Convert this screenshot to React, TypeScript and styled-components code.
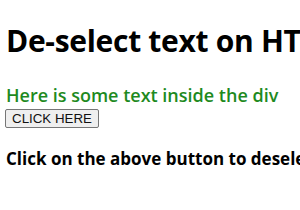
import React, { useRef } from "react";
import styled, { createGlobalStyle } from "styled-components";

const GlobalStyle = createGlobalStyle`
  body {
    margin: 0;
    background: #fff;
    font-family: "Open Sans", "Noto Sans", sans-serif;
    color: #000;
    overflow: hidden;
  }
`;

const Page = styled.div`
  display: flex;
  flex-direction: column;
  align-items: flex-start;
  padding: 0 0 0 6px;
  width: 300px;
  white-space: nowrap;
`;

const Title = styled.h1`
  font-size: 30px;
  font-weight: 700;
  margin: 21px 0 0;
  line-height: 40px;
  letter-spacing: -0.3px;
`;

const GreenText = styled.div`
  color: #1e8a1e;
  font-size: 18px;
  font-weight: 600;
  line-height: 24px;
  margin-top: 22px;
`;

const Button = styled.button`
  font-family: "Liberation Sans", Arial, sans-serif;
  font-size: 13.33px;
  color: #111;
  background: #efefef;
  border: 1px solid #767676;
  border-radius: 2px;
  padding: 1px 6px;
  height: 19px;
  line-height: 15px;
  margin: 2px 0 0 -1px;
`;

const Note = styled.h4`
  font-size: 17px;
  font-weight: 700;
  margin: 20px 0 0;
  line-height: 22px;
`;

export default function App() {
  const textRef = useRef<HTMLDivElement>(null);

  const deselect = () => {
    window.getSelection()?.removeAllRanges();
  };

  return (
    <>
      <GlobalStyle />
      <Page>
        <Title>De-select text on HTML page</Title>
        <GreenText ref={textRef}>Here is some text inside the div</GreenText>
        <Button onClick={deselect}>CLICK HERE</Button>
        <Note>Click on the above button to deselect text</Note>
      </Page>
    </>
  );
}
